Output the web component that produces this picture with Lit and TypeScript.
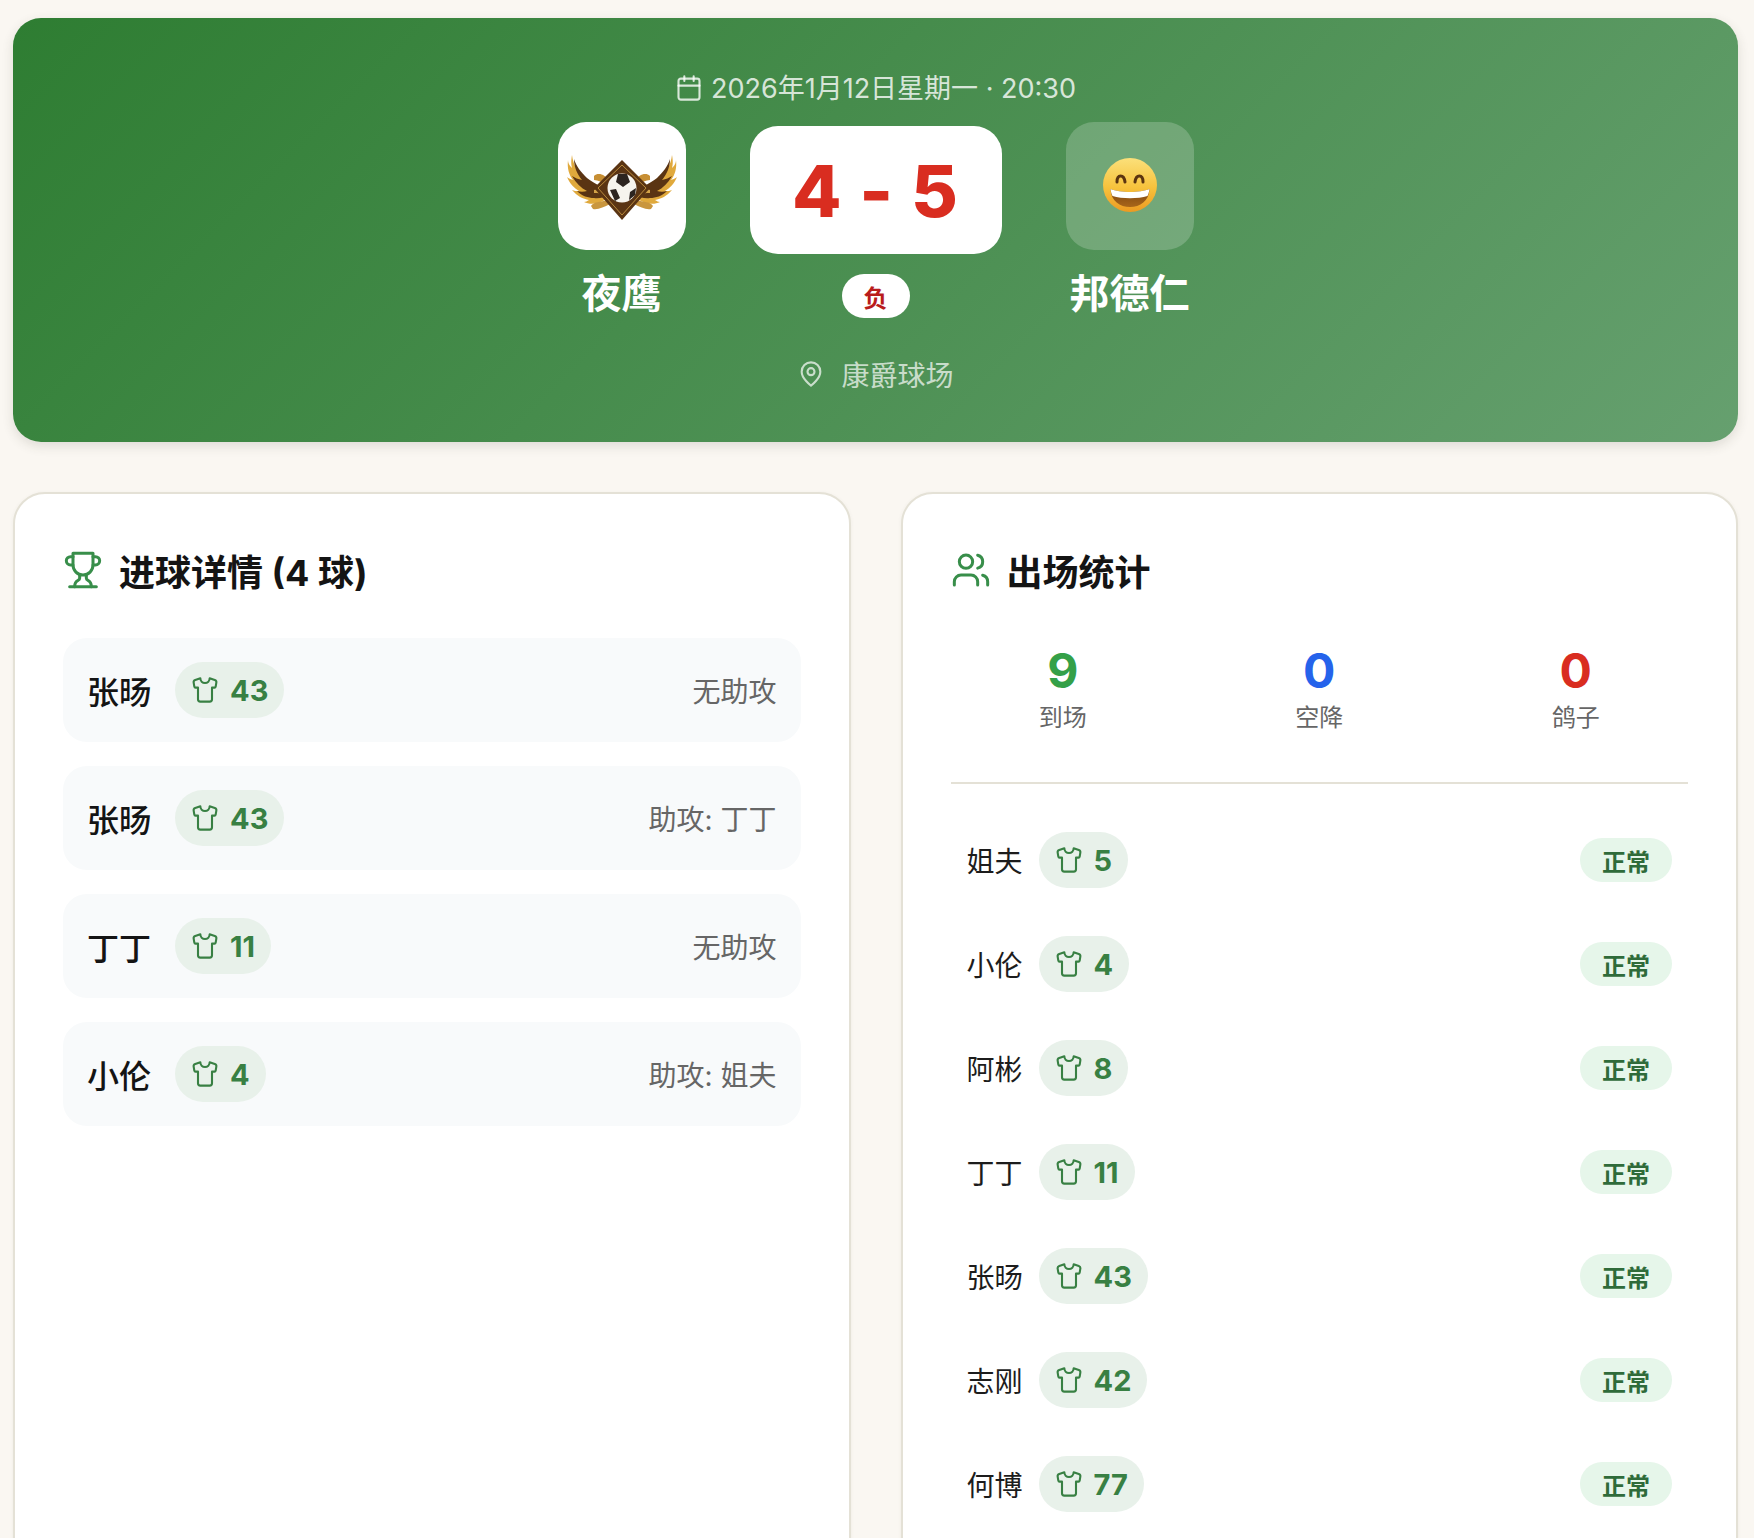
import { LitElement, html, css, svg } from "lit";
import { customElement } from "lit/decorators.js";

const shirt = html`<svg class="shirt" viewBox="0 0 24 24" fill="none" stroke="currentColor" stroke-width="1.8" stroke-linecap="round" stroke-linejoin="round"><path d="M20.38 3.46 16 2a4 4 0 0 1-8 0L3.62 3.46a2 2 0 0 0-1.34 2.23l.58 3.47a1 1 0 0 0 .99.84H6v10c0 1.1.9 2 2 2h8a2 2 0 0 0 2-2V10h2.15a1 1 0 0 0 .99-.84l.58-3.47a2 2 0 0 0-1.34-2.23z"/></svg>`;

const wing = svg`
  <path d="M54 70 C42 66 33 62 27 56 C19 50 15 42 14 33 C13 39 13 42 14 46 C11 43 10 41 10 38 C9 46 11 53 15 58 C12 57 10 56 9 55 C12 62 16 66 21 69 C18 69 16 69 14 68 C19 74 25 77 31 78 C29 79 28 80 26 80 C32 83 40 82 47 78 Z" fill="#e0a93c"/>
  <path d="M54 69 C44 65 35 61 29 56 C23 50 18 44 16 37 C16 45 19 52 24 58 C20 57 17 56 14 54 C18 61 23 66 29 69 C26 70 22 70 19 69 C24 74 30 76 36 76 C41 77 47 75 52 73 Z" fill="#5a3413"/>
  <path d="M36 54 C40 50 47 52 52 60 L49 64 C44 60 40 58 36 58 Z" fill="#c78f34"/>
  <path d="M33 84 C35 80 42 80 50 78 L52 82 C46 85 40 88 35 87 Z" fill="#c9963e"/>
  <path d="M36 68 C41 66 46 67 51 71 L48 74 C44 71 40 71 36 71 Z" fill="#d3a248"/>
`;

@customElement("app-root")
export class AppRoot extends LitElement {
  static styles = css`
    :host {
      display: block;
      height: 1538px;
      overflow: hidden;
      background: #faf7f2;
      font-family: Inter, "Noto Sans CJK SC", sans-serif;
      color: #141414;
    }
    .page {
      padding: 18px 16px 0 13px;
    }
    .hero {
      height: 424px;
      box-sizing: border-box;
      padding: 48px 0;
      border-radius: 28px;
      background: linear-gradient(135deg, #2e7d32 0%, #66a06f 100%);
      box-shadow: 0 4px 12px rgba(60, 60, 40, 0.14);
      display: flex;
      flex-direction: column;
      align-items: center;
      color: #fff;
    }
    .date {
      height: 40px;
      display: flex;
      align-items: center;
      gap: 8px;
      font-size: 27px;
      color: rgba(255, 255, 255, 0.8);
    }
    .date svg {
      width: 28px;
      height: 28px;
      margin-top: 4px;
    }
    .teams {
      margin-top: 16px;
      display: flex;
      align-items: center;
      gap: 64px;
    }
    .team {
      width: 128px;
      display: flex;
      flex-direction: column;
      align-items: center;
      gap: 16px;
    }
    .crest {
      width: 128px;
      height: 128px;
      border-radius: 28px;
      background: #fff;
      display: flex;
      align-items: center;
      justify-content: center;
    }
    .crest.away {
      background: rgba(255, 255, 255, 0.2);
    }
    .crest svg {
      display: block;
    }
    .name {
      font-size: 40px;
      line-height: 56px;
      font-weight: 700;
      white-space: nowrap;
    }
    .mid {
      display: flex;
      flex-direction: column;
      align-items: center;
      gap: 20px;
    }
    .score {
      width: 252px;
      height: 128px;
      border-radius: 28px;
      background: #fff;
      color: #d92d20;
      font-size: 72px;
      font-weight: 800;
      display: flex;
      align-items: center;
      justify-content: center;
      letter-spacing: 1px;
    }
    .result {
      width: 68px;
      height: 44px;
      border-radius: 22px;
      background: #fff;
      color: #b91c1c;
      font-size: 24px;
      font-weight: 700;
      display: flex;
      align-items: center;
      justify-content: center;
    }
    .venue {
      margin-top: 32px;
      height: 40px;
      display: flex;
      align-items: center;
      gap: 16px;
      font-size: 28px;
      color: rgba(255, 255, 255, 0.7);
    }
    .venue svg {
      width: 28px;
      height: 28px;
    }
    .grid {
      margin-top: 50px;
      display: grid;
      grid-template-columns: 1fr 1fr;
      gap: 50px;
    }
    .card {
      box-sizing: border-box;
      height: 1200px;
      padding: 48px;
      background: #fff;
      border: 2px solid #e4e1d6;
      border-radius: 32px;
      box-shadow: 0 1px 4px rgba(60, 60, 40, 0.06);
    }
    .title {
      height: 56px;
      display: flex;
      align-items: center;
      gap: 16px;
      font-size: 36px;
      font-weight: 700;
      color: #141414;
    }
    .title svg {
      width: 40px;
      height: 40px;
      color: #388e4a;
      flex: none;
    }
    .goals {
      margin-top: 40px;
      display: flex;
      flex-direction: column;
      gap: 24px;
    }
    .goal {
      height: 104px;
      box-sizing: border-box;
      padding: 0 24px;
      border-radius: 24px;
      background: #f8fafb;
      display: flex;
      align-items: center;
      gap: 24px;
    }
    .goal .who {
      font-size: 32px;
      font-weight: 500;
    }
    .goal .assist {
      margin-left: auto;
      font-size: 28px;
      color: #666;
    }
    .pill {
      height: 56px;
      box-sizing: border-box;
      padding: 0 16px;
      border-radius: 28px;
      background: #e8f1ea;
      color: #388043;
      display: flex;
      align-items: center;
      gap: 11px;
      font-weight: 700;
      font-size: 29px;
    }
    .shirt {
      width: 28px;
      height: 28px;
      flex: none;
    }
    .stats {
      margin-top: 40px;
      display: grid;
      grid-template-columns: repeat(3, 1fr);
      gap: 32px;
      height: 144px;
      border-bottom: 2px solid #e4e1d6;
      text-align: center;
    }
    .num {
      font-size: 48px;
      line-height: 58px;
      font-weight: 700;
      margin-top: 4px;
    }
    .label {
      font-size: 24px;
      line-height: 32px;
      color: #666;
      margin-top: 2px;
    }
    .green { color: #34a048; }
    .blue { color: #2563eb; }
    .red { color: #d92d20; }
    .list {
      margin-top: 24px;
      display: flex;
      flex-direction: column;
    }
    .player {
      height: 104px;
      box-sizing: border-box;
      padding: 0 16px;
      display: flex;
      align-items: center;
      gap: 16px;
    }
    .player .who {
      font-size: 28px;
      color: #1c1c1c;
    }
    .status {
      margin-left: auto;
      height: 44px;
      padding: 0 22px;
      border-radius: 22px;
      background: #e6f6ea;
      color: #2f6b3a;
      font-size: 24px;
      font-weight: 700;
      display: flex;
      align-items: center;
    }
  `;

  private goals = [
    ["张旸", "43", "无助攻"],
    ["张旸", "43", "助攻: 丁丁"],
    ["丁丁", "11", "无助攻"],
    ["小伦", "4", "助攻: 姐夫"],
  ];

  private players = [
    ["姐夫", "5"],
    ["小伦", "4"],
    ["阿彬", "8"],
    ["丁丁", "11"],
    ["张旸", "43"],
    ["志刚", "42"],
    ["何博", "77"],
  ];

  render() {
    return html`
      <div class="page">
        <section class="hero">
          <div class="date">
            <svg viewBox="0 0 24 24" fill="none" stroke="currentColor" stroke-width="1.8" stroke-linecap="round" stroke-linejoin="round"><path d="M8 2v4M16 2v4"/><rect x="3" y="4" width="18" height="18" rx="2"/><path d="M3 10h18"/></svg>
            <span>2026年1月12日星期一 · 20:30</span>
          </div>
          <div class="teams">
            <div class="team">
              <div class="crest">
                <svg width="128" height="128" viewBox="0 0 128 128">
                  ${wing}
                  <g transform="translate(128 0) scale(-1 1)">${wing}</g>
                  <path d="M64 38 L92 66 L64 98 L36 66 Z" fill="#5a3413"/>
                  <path d="M64 43 L88 66 L64 93 L40 66 Z" fill="none" stroke="#b98a3c" stroke-width="1"/>
                  <circle cx="64" cy="66" r="14.5" fill="#f6f4ee"/>
                  <path d="M60 52 L69 52 L72 60 L65 65 L58 60 Z M52 68 L58 67 L62 76 L57 79 Z M72 70 L78 66 L77 73 L71 78 Z" fill="#2c2420"/>
                </svg>
              </div>
              <div class="name">夜鹰</div>
            </div>
            <div class="mid">
              <div class="score">4 - 5</div>
              <div class="result">负</div>
            </div>
            <div class="team">
              <div class="crest away">
                <svg width="56" height="56" viewBox="0 0 56 56">
                  <defs>
                    <linearGradient id="face" x1="0" y1="0" x2="0" y2="1">
                      <stop offset="0" stop-color="#fbe07a"/>
                      <stop offset="0.55" stop-color="#f7c23c"/>
                      <stop offset="1" stop-color="#ec9a22"/>
                    </linearGradient>
                    <linearGradient id="mouth" x1="0" y1="0" x2="0" y2="1">
                      <stop offset="0" stop-color="#7a4310"/>
                      <stop offset="1" stop-color="#a9661a"/>
                    </linearGradient>
                  </defs>
                  <circle cx="28" cy="27" r="27" fill="url(#face)"/>
                  <path d="M15 24 C15 16 22 16 23 24 M33 24 C34 16 41 16 41 24" fill="none" stroke="#5b3410" stroke-width="3" stroke-linecap="round"/>
                  <path d="M8.5 31 C18 35 38 35 47.5 31 C47 43 38 49 28 49 C18 49 9 43 8.5 31 Z" fill="url(#mouth)"/>
                  <path d="M8.5 31 C18 35 38 35 47.5 31 C47 34 46.5 36 45.5 38 C36 41 20 41 10.5 38 C9.5 36 9 34 8.5 31 Z" fill="#fff"/>
                </svg>
              </div>
              <div class="name">邦德仁</div>
            </div>
          </div>
          <div class="venue">
            <svg viewBox="0 0 24 24" fill="none" stroke="currentColor" stroke-width="1.8" stroke-linecap="round" stroke-linejoin="round"><path d="M20 10c0 6-8 12-8 12s-8-6-8-12a8 8 0 0 1 16 0Z"/><circle cx="12" cy="10" r="3"/></svg>
            <span>康爵球场</span>
          </div>
        </section>
        <div class="grid">
          <section class="card">
            <div class="title">
              <svg viewBox="0 0 24 24" fill="none" stroke="currentColor" stroke-width="1.8" stroke-linecap="round" stroke-linejoin="round"><path d="M6 9H4.5a2.5 2.5 0 0 1 0-5H6"/><path d="M18 9h1.5a2.5 2.5 0 0 0 0-5H18"/><path d="M4 22h16"/><path d="M10 14.66V17c0 .55-.47.98-.97 1.21C7.85 18.75 7 20.24 7 22"/><path d="M14 14.66V17c0 .55.47.98.97 1.21C16.15 18.75 17 20.24 17 22"/><path d="M18 2H6v7a6 6 0 0 0 12 0V2Z"/></svg>
              <span>进球详情 (4 球)</span>
            </div>
            <div class="goals">
              ${this.goals.map(
                ([who, n, a]) => html`<div class="goal">
                  <span class="who">${who}</span>
                  <span class="pill">${shirt}<span>${n}</span></span>
                  <span class="assist">${a}</span>
                </div>`
              )}
            </div>
          </section>
          <section class="card">
            <div class="title">
              <svg viewBox="0 0 24 24" fill="none" stroke="currentColor" stroke-width="1.8" stroke-linecap="round" stroke-linejoin="round"><path d="M16 21v-2a4 4 0 0 0-4-4H6a4 4 0 0 0-4 4v2"/><circle cx="9" cy="7" r="4"/><path d="M22 21v-2a4 4 0 0 0-3-3.87"/><path d="M16 3.13a4 4 0 0 1 0 7.75"/></svg>
              <span>出场统计</span>
            </div>
            <div class="stats">
              <div><div class="num green">9</div><div class="label">到场</div></div>
              <div><div class="num blue">0</div><div class="label">空降</div></div>
              <div><div class="num red">0</div><div class="label">鸽子</div></div>
            </div>
            <div class="list">
              ${this.players.map(
                ([who, n]) => html`<div class="player">
                  <span class="who">${who}</span>
                  <span class="pill">${shirt}<span>${n}</span></span>
                  <span class="status">正常</span>
                </div>`
              )}
            </div>
          </section>
        </div>
      </div>
    `;
  }
}
